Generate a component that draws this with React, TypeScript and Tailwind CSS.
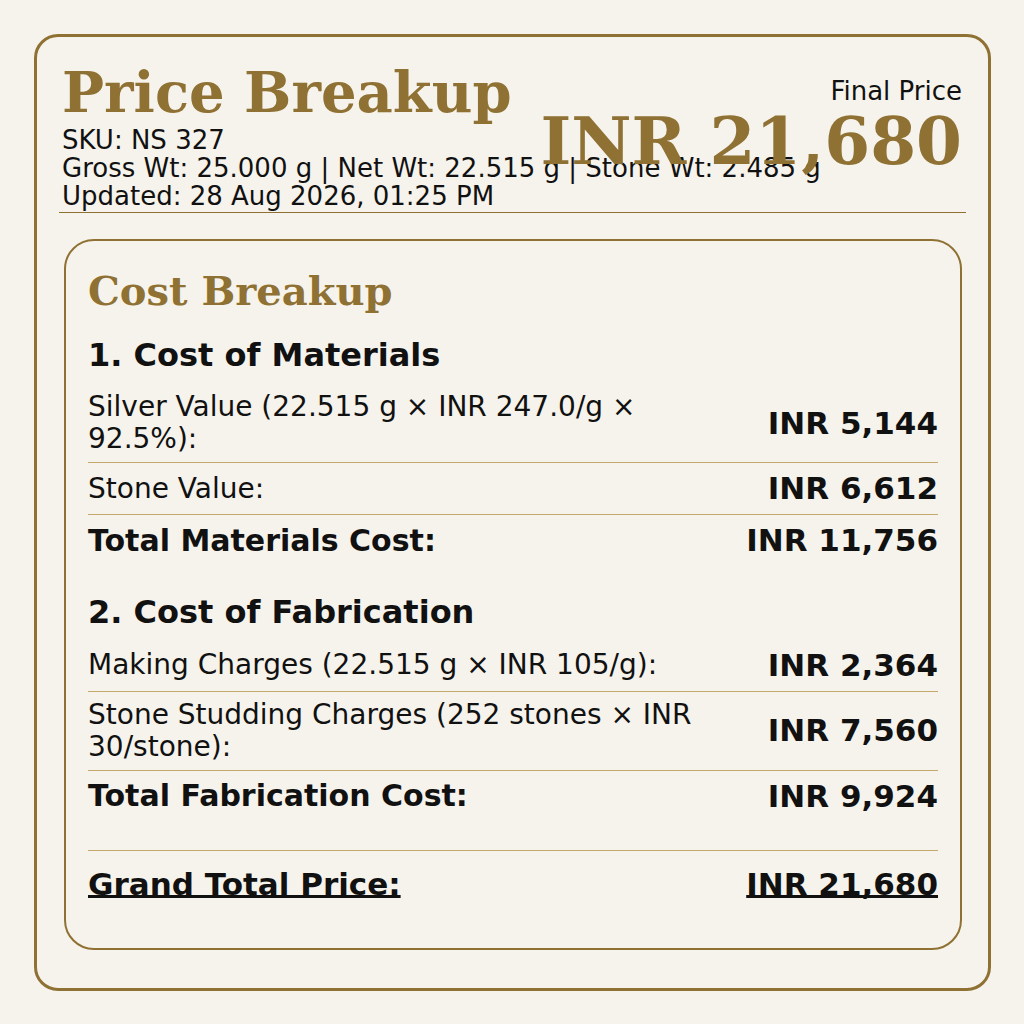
import React from 'react';

type Row = { label: string; value: string; total?: boolean };

const materials: Row[] = [
  { label: 'Silver Value (22.515 g × INR 247.0/g × 92.5%):', value: 'INR 5,144' },
  { label: 'Stone Value:', value: 'INR 6,612' },
  { label: 'Total Materials Cost:', value: 'INR 11,756', total: true },
];

const fabrication: Row[] = [
  { label: 'Making Charges (22.515 g × INR 105/g):', value: 'INR 2,364' },
  { label: 'Stone Studding Charges (252 stones × INR 30/stone):', value: 'INR 7,560' },
  { label: 'Total Fabrication Cost:', value: 'INR 9,924', total: true },
];

function CostRow({ row }: { row: Row }) {
  return (
    <div
      className={`flex items-center justify-between gap-10 py-[7px] ${
        row.total ? '' : 'border-b border-[#c4a86c]'
      }`}
    >
      <div
        className={
          row.total
            ? 'flex-1 min-w-0 text-[30px] leading-[36px] font-bold'
            : 'flex-1 min-w-0 text-[28px] leading-[32px]'
        }
      >
        {row.label}
      </div>
      <div className="shrink-0 text-[31px] leading-[37px] font-bold text-right">{row.value}</div>
    </div>
  );
}

export default function App() {
  return (
    <div className="min-h-[1024px] bg-[#f6f3ec] pt-[34px] pl-[34px] font-['DejaVu_Sans',sans-serif] text-[#111111]">
      <div className="w-[957px] h-[957px] border-[3px] border-[#8f7133] rounded-[24px] px-[25px] pt-[27px]">
        {/* Header */}
        <div className="relative">
          <h1 className="font-['DejaVu_Serif',serif] font-bold text-[56px] leading-none text-[#8f7133]">
            Price Breakup
          </h1>
          <div className="mt-[6px] text-[26px] leading-[28px] whitespace-nowrap">
            <div>SKU: NS 327</div>
            <div>Gross Wt: 25.000 g | Net Wt: 22.515 g | Stone Wt: 2.485 g</div>
            <div>Updated: 28 Aug 2026, 01:25 PM</div>
          </div>
          <div className="absolute top-[13px] right-[1px] flex flex-col items-end">
            <div className="text-[26px] leading-[28px]">Final Price</div>
            <div className="mt-[3px] font-['DejaVu_Serif',serif] font-bold text-[66px] leading-none text-[#8f7133]">
              INR 21,680
            </div>
          </div>
        </div>
        <div className="mt-[2px] -mx-[3px] h-px bg-[#8f7133]" />

        {/* Cost breakup card */}
        <div className="mt-[26px] ml-[2px] mr-px h-[711px] border-2 border-[#8f7133] rounded-[30px] px-[22px] pt-[26px]">
          <h2 className="font-['DejaVu_Serif',serif] font-bold text-[40px] leading-[1.2] text-[#8f7133]">
            Cost Breakup
          </h2>

          <h3 className="mt-[21px] mb-[10px] text-[32px] leading-[1.2] font-bold">1. Cost of Materials</h3>
          {materials.map((r) => (
            <CostRow key={r.label} row={r} />
          ))}

          <h3 className="mt-[27px] mb-[8px] text-[32px] leading-[1.2] font-bold">2. Cost of Fabrication</h3>
          {fabrication.map((r) => (
            <CostRow key={r.label} row={r} />
          ))}

          <div className="mt-[28px] border-t border-[#c4a86c] pt-[15px] flex items-center justify-between text-[31px] leading-[37px] font-bold">
            <span className="underline decoration-[3px] underline-offset-0 [text-decoration-skip-ink:none]">
              Grand Total Price:
            </span>
            <span className="underline decoration-[3px] underline-offset-0 [text-decoration-skip-ink:none]">
              INR 21,680
            </span>
          </div>
        </div>
      </div>
    </div>
  );
}
